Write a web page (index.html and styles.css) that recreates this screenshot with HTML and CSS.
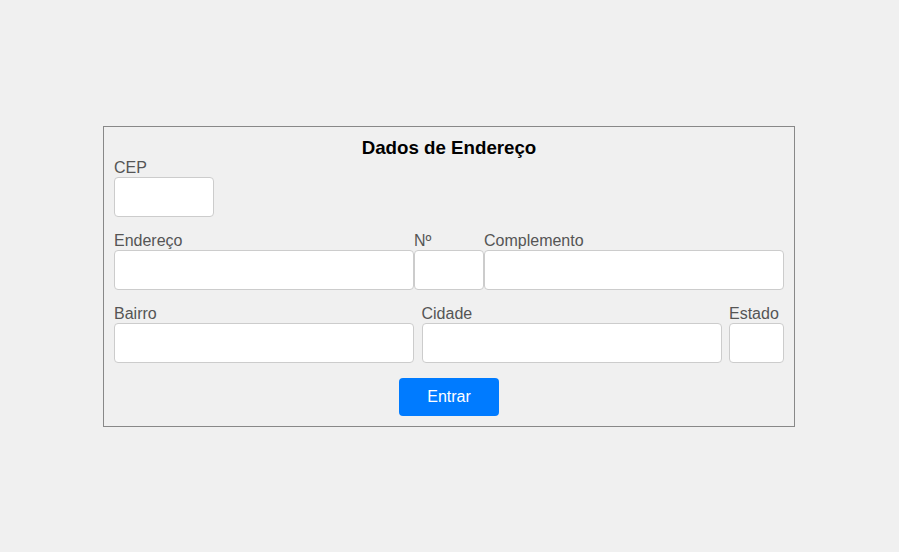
FILE: index.html
```html
<!DOCTYPE html>
<html lang="pt-BR">
<head>
<meta charset="utf-8">
<title>Dados de Endereço</title>
<link rel="stylesheet" href="styles.css">
</head>
<body>
<form class="form-box">
  <h3 class="title">Dados de Endereço</h3>
  <div class="row">
    <div class="field w-cep">
      <label class="label">CEP</label>
      <input class="input" type="text">
    </div>
  </div>
  <div class="row">
    <div class="field w-300">
      <label class="label">Endereço</label>
      <input class="input" type="text">
    </div>
    <div class="field w-num">
      <label class="label">Nº</label>
      <input class="input" type="text">
    </div>
    <div class="field w-300">
      <label class="label">Complemento</label>
      <input class="input" type="text">
    </div>
  </div>
  <div class="row row-spread">
    <div class="field w-300">
      <label class="label">Bairro</label>
      <input class="input" type="text">
    </div>
    <div class="field w-300">
      <label class="label">Cidade</label>
      <input class="input" type="text">
    </div>
    <div class="field w-uf">
      <label class="label">Estado</label>
      <input class="input" type="text">
    </div>
  </div>
  <div class="actions">
    <button class="btn" type="button">Entrar</button>
  </div>
</form>
</body>
</html>
```

FILE: styles.css
```css
* { box-sizing: border-box; }
html, body {
  margin: 0;
  padding: 0;
  background: #f0f0f0;
  font-family: "Liberation Sans", Arial, sans-serif;
}
body {
  padding-top: 126px;
  padding-left: 103px;
}
.form-box {
  width: 692px;
  height: 301px;
  border: 1px solid #888;
  padding: 10px;
  display: flex;
  flex-direction: column;
  gap: 14px;
}
.title {
  margin: 0 0 -14px 0;
  font-size: 18.72px;
  font-weight: bold;
  color: #000;
  text-align: center;
  line-height: 21px;
}
.row {
  display: flex;
}
.row-spread {
  justify-content: space-between;
}
.field {
  display: flex;
  flex-direction: column;
}
.w-cep { width: 100px; }
.w-300 { width: 300px; }
.w-num { width: 70px; }
.w-uf { width: 55px; }
.label {
  font-size: 16px;
  line-height: 18px;
  color: #555;
  margin-top: 1px;
}
.input {
  width: 100%;
  height: 40px;
  border: 1px solid #ccc;
  border-radius: 4px;
  background: #fff;
  padding: 0 8px;
  font-size: 16px;
  font-family: inherit;
  outline: none;
}
.actions {
  display: flex;
  justify-content: center;
  margin-top: 1px;
}
.btn {
  width: 100px;
  height: 38px;
  border: none;
  border-radius: 4px;
  background: #007bff;
  color: #fff;
  font-size: 16px;
  font-family: inherit;
  cursor: pointer;
}
```
